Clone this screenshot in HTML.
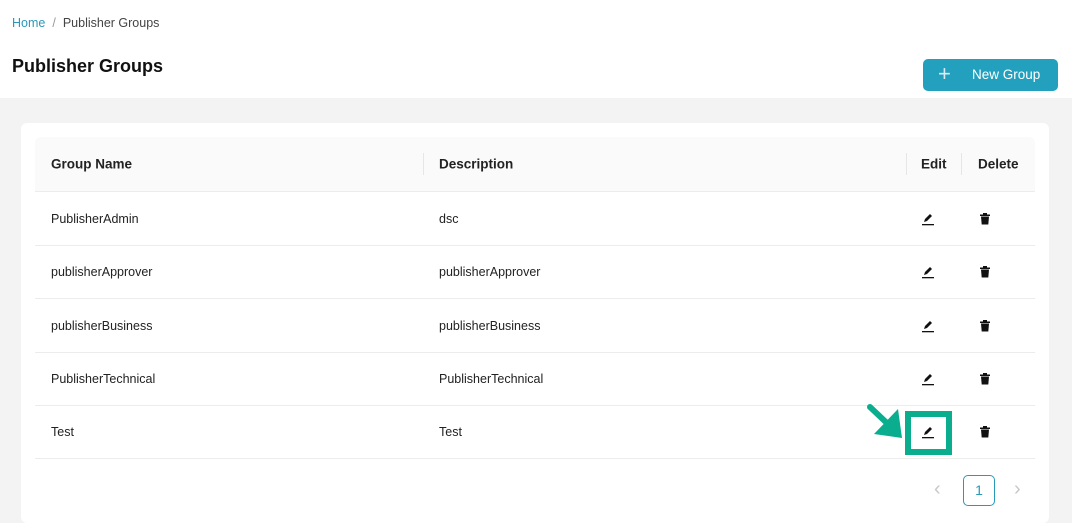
<!DOCTYPE html>
<html><head><meta charset="utf-8"><style>
*{box-sizing:border-box;margin:0;padding:0}
body{width:1072px;height:514px;overflow:hidden;font-family:"Liberation Sans",sans-serif;background:#f3f3f3;position:relative;color:#1a1a1a}
.top{position:absolute;left:0;top:0;width:1072px;height:98px;background:#fff}
.bc{position:absolute;left:12px;top:16px;font-size:12.5px;color:#444}
.bc a{color:#2a98b8;text-decoration:none}
.bc .s{color:#999;margin:0 7px}
h1{position:absolute;left:12px;top:56px;font-size:18px;font-weight:bold;color:#111}
.btn{position:absolute;left:923px;top:59px;width:135px;height:32px;background:#22a0be;border-radius:5px;color:#fff;font-size:13.5px}
.btn .p{position:absolute;left:15px;top:2px;font-size:22px;font-weight:300;color:#d8eef4}
.btn .t{position:absolute;left:49px;top:8px}
.card{position:absolute;left:21px;top:123px;width:1028px;height:400px;background:#fff;border-radius:6px}
.row{position:absolute;left:35px;width:1000px;border-bottom:1px solid #ececec;font-size:12.5px;color:#222}
.hd{top:137px;height:55px;background:#fafafa;font-weight:bold;font-size:13.5px;border-radius:6px 6px 0 0}
.c{position:absolute;top:50%;transform:translateY(-50%)}
.sep{position:absolute;top:16px;width:1px;height:22px;background:#e6e6e6}
.ed,.dl{position:absolute;top:50%;transform:translate(-50%,-50%)}
.box{position:absolute;left:905px;top:411px;width:47px;height:44px;border:6px solid #0aae8e}
.pg{position:absolute;left:963px;top:475px;width:32px;height:31px;border:1px solid #2a98b8;border-radius:5px;color:#2a98b8;text-align:center;line-height:29px;font-size:14px}
.ch{position:absolute;top:478px;color:#c8c8c8;font-size:20px}
</style></head><body>
<div class="top"></div>
<div class="bc"><a>Home</a><span class="s">/</span>Publisher Groups</div>
<h1>Publisher Groups</h1>
<div class="btn"><span class="p">+</span><span class="t">New Group</span></div>
<div class="card"></div>
<div class="row hd">
<span class="c" style="left:16px">Group Name</span>
<div class="sep" style="left:388px"></div>
<span class="c" style="left:404px">Description</span>
<div class="sep" style="left:871px"></div>
<span class="c" style="left:886px">Edit</span>
<div class="sep" style="left:926px"></div>
<span class="c" style="left:943px">Delete</span>
</div>
<div class="row" style="top:192px;height:54px"><span class="c" style="left:16px">PublisherAdmin</span><span class="c" style="left:404px">dsc</span>
<svg class="ed" style="left:893px" width="14" height="14" viewBox="0 0 14 14"><path d="M3 10l1-3 5-5 2 2-5 5z" fill="#111"/><rect x="1" y="12" width="12" height="1.3" fill="#111"/></svg>
<svg class="dl" style="left:950px" width="10" height="12" viewBox="0 0 10 12"><rect x="0" y="1.5" width="10" height="1.5" fill="#111"/><rect x="3" y="0" width="4" height="2" fill="#111"/><path d="M1 3.5h8l-.7 8H1.7z" fill="#111"/></svg></div>
<div class="row" style="top:246px;height:53px"><span class="c" style="left:16px">publisherApprover</span><span class="c" style="left:404px">publisherApprover</span>
<svg class="ed" style="left:893px" width="14" height="14" viewBox="0 0 14 14"><path d="M3 10l1-3 5-5 2 2-5 5z" fill="#111"/><rect x="1" y="12" width="12" height="1.3" fill="#111"/></svg>
<svg class="dl" style="left:950px" width="10" height="12" viewBox="0 0 10 12"><rect x="0" y="1.5" width="10" height="1.5" fill="#111"/><rect x="3" y="0" width="4" height="2" fill="#111"/><path d="M1 3.5h8l-.7 8H1.7z" fill="#111"/></svg></div>
<div class="row" style="top:299px;height:54px"><span class="c" style="left:16px">publisherBusiness</span><span class="c" style="left:404px">publisherBusiness</span>
<svg class="ed" style="left:893px" width="14" height="14" viewBox="0 0 14 14"><path d="M3 10l1-3 5-5 2 2-5 5z" fill="#111"/><rect x="1" y="12" width="12" height="1.3" fill="#111"/></svg>
<svg class="dl" style="left:950px" width="10" height="12" viewBox="0 0 10 12"><rect x="0" y="1.5" width="10" height="1.5" fill="#111"/><rect x="3" y="0" width="4" height="2" fill="#111"/><path d="M1 3.5h8l-.7 8H1.7z" fill="#111"/></svg></div>
<div class="row" style="top:353px;height:53px"><span class="c" style="left:16px">PublisherTechnical</span><span class="c" style="left:404px">PublisherTechnical</span>
<svg class="ed" style="left:893px" width="14" height="14" viewBox="0 0 14 14"><path d="M3 10l1-3 5-5 2 2-5 5z" fill="#111"/><rect x="1" y="12" width="12" height="1.3" fill="#111"/></svg>
<svg class="dl" style="left:950px" width="10" height="12" viewBox="0 0 10 12"><rect x="0" y="1.5" width="10" height="1.5" fill="#111"/><rect x="3" y="0" width="4" height="2" fill="#111"/><path d="M1 3.5h8l-.7 8H1.7z" fill="#111"/></svg></div>
<div class="row" style="top:406px;height:53px"><span class="c" style="left:16px">Test</span><span class="c" style="left:404px">Test</span>
<svg class="ed" style="left:893px" width="14" height="14" viewBox="0 0 14 14"><path d="M3 10l1-3 5-5 2 2-5 5z" fill="#111"/><rect x="1" y="12" width="12" height="1.3" fill="#111"/></svg>
<svg class="dl" style="left:950px" width="10" height="12" viewBox="0 0 10 12"><rect x="0" y="1.5" width="10" height="1.5" fill="#111"/><rect x="3" y="0" width="4" height="2" fill="#111"/><path d="M1 3.5h8l-.7 8H1.7z" fill="#111"/></svg></div>
<div class="box"></div>
<svg style="position:absolute;left:864px;top:401px" width="42" height="40" viewBox="0 0 42 40"><path d="M6 6L26 25" stroke="#0aae8e" stroke-width="6" stroke-linecap="round"/><path d="M34 8L38 37L10 33Z" fill="#0aae8e"/></svg>
<span class="ch" style="left:934px">&#8249;</span>
<div class="pg">1</div>
<span class="ch" style="left:1014px">&#8250;</span>
</body></html>
